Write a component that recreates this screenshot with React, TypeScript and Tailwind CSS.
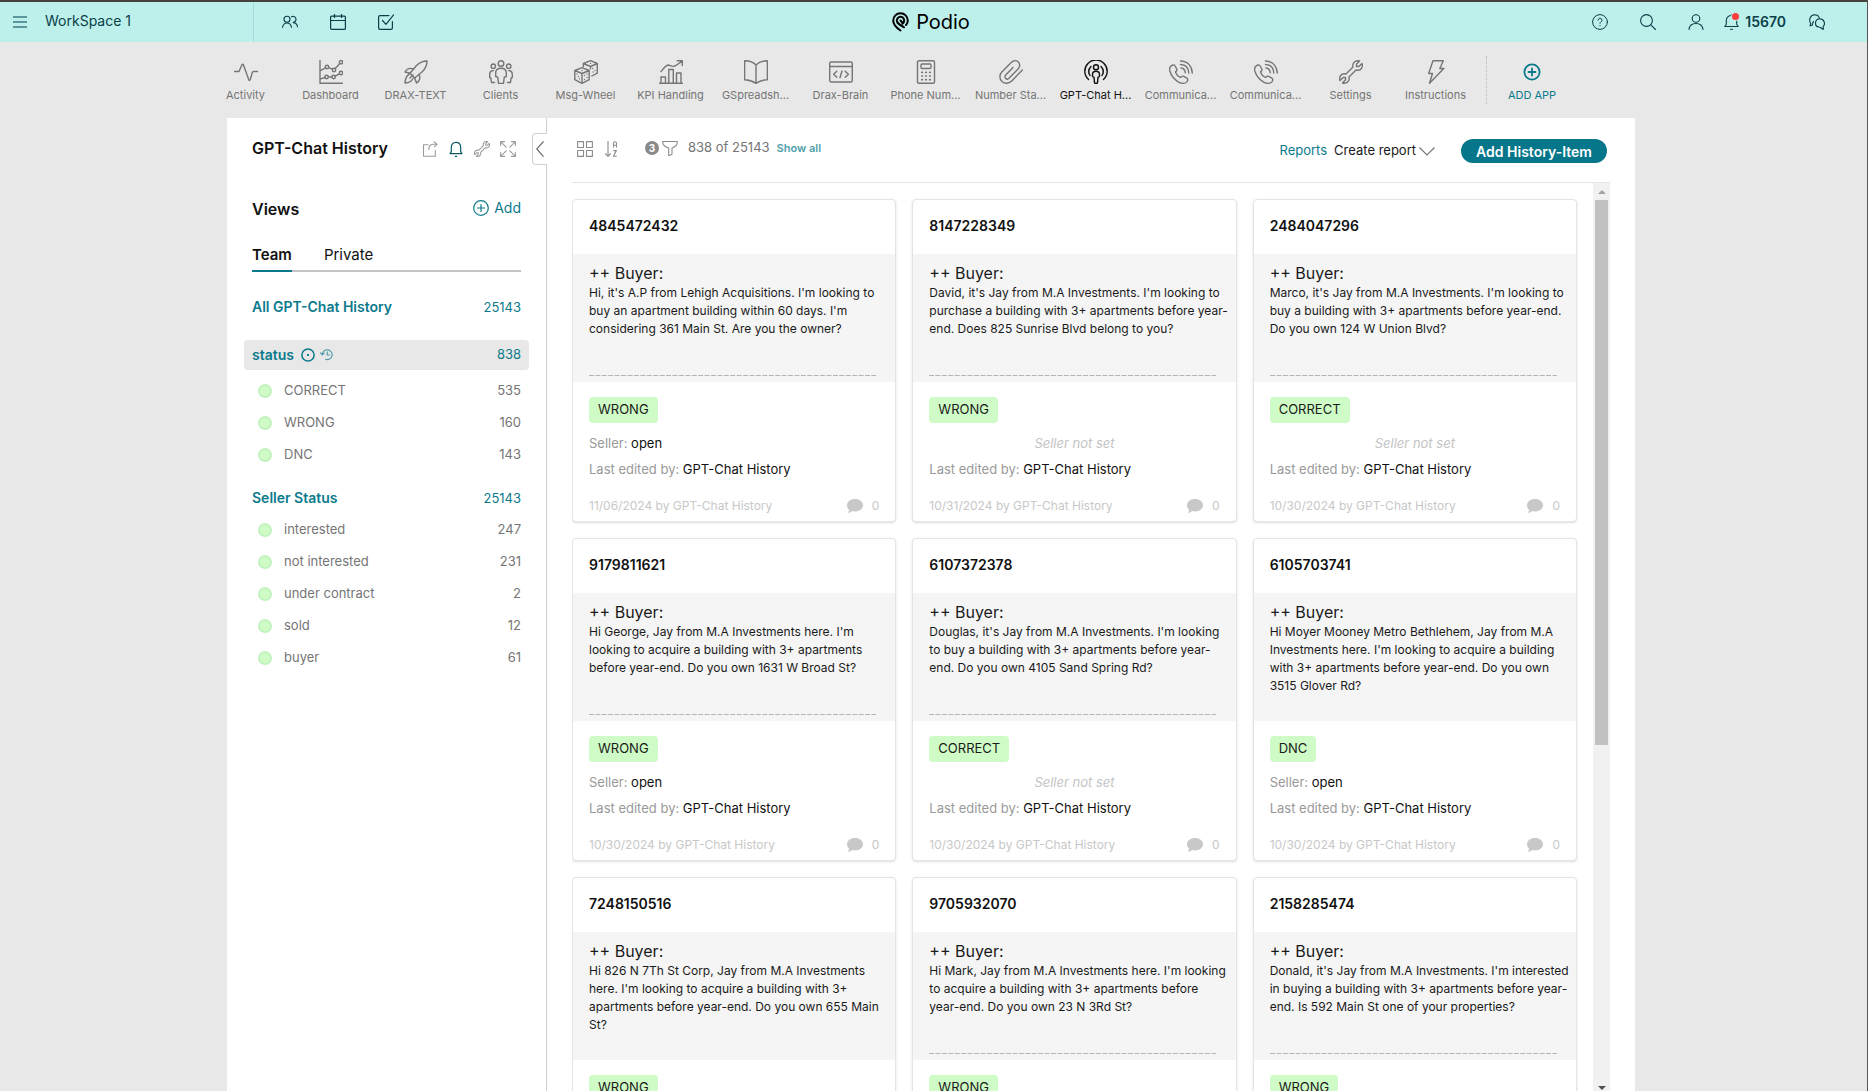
import React from "react";

type IconProps = { className?: string; children: React.ReactNode; box?: number; sw?: number };

function Svg({ className = "size-6", children, box = 24, sw = 1.4 }: IconProps) {
  return (
    <svg
      className={className}
      viewBox={`0 0 ${box} ${box}`}
      fill="none"
      stroke="currentColor"
      strokeWidth={sw}
      strokeLinecap="round"
      strokeLinejoin="round"
      aria-hidden="true"
    >
      {children}
    </svg>
  );
}

const wrenchPath =
  "M20.5 1 17.5 4.2v2.3h2.3L23 3.5c1 3-.5 7-4.5 6.8L17 10l-7 7c.8 3-1 6-4.5 6.3-.8 0-1.4-.1-2-.3l3-3.2v-2.3H4.2L1 20.5c-1-3 .5-7 4.5-6.8L7 14l7-7c-.8-3 1-6 4.5-6.3.8 0 1.4.1 2 .3z";

const phone = (
  <>
    <path d="M2.5 5.6 4 5q1.5-.5 2.2 1l1.5 3q.6 1.3-.5 2.2l-.8.8c.8 2.3 2.5 4.2 5 5.5l1.2-.9q1-.8 2.2-.2l3 1.7q1.3.8.9 2.2l-.6 1.3c-1.5 2-5 2.2-8 .7C6 20 2 15 .8 11c-.5-2 .2-4.4 1.7-5.4z" />
    <path d="M11.5 1c7 0 11.5 5 11.8 12M11.5 4.5c5 .2 8 3.5 8.3 8.5M12 8c2.5.2 4 2 4.3 4.8" />
  </>
);

const apps: { label: string; icon: React.ReactNode; active?: boolean }[] = [
  { label: "Activity", icon: <path d="M.5 11.5H5L8 4.8q.7-1.3 1.4 0l5.4 15q.8 1.4 1.4 0l2.3-7.8.9-.5h4.1" /> },
  {
    label: "Dashboard",
    icon: (
      <>
        <path d="M1 .5v22.8h22.5M1 10.8l5.4-3M9.7 7.7l3.6 1.5M16.2 8.6l4.7-5M1 19.2l4.8-1.7M9.5 17h3.2M16.2 16.2l4.2-2.3" />
        <circle cx="8" cy="7" r="1.7" />
        <circle cx="15" cy="10" r="1.7" />
        <circle cx="22" cy="2.2" r="1.7" />
        <circle cx="7.6" cy="17" r="1.7" />
        <circle cx="14.6" cy="17" r="1.7" />
        <circle cx="22" cy="13" r="1.7" />
      </>
    ),
  },
  {
    label: "DRAX-TEXT",
    icon: (
      <>
        <path d="M23 1c-5 0-8.500 2.500-10.500 4.500L6 13.300l4.700 4.700 7.800-6.500C20.500 9.500 23 6 23 1z" />
        <path d="M9.700 9C5.500 7.500 3 8.500 1 12l5 1.300M15 14.500c2 4 .5 6.500-2.500 8.500l-1.800-5M5 14.500C2 16 1.300 19 1 23c4-.3 6.500-1.500 8-4.500M9 15l-3 3" />
      </>
    ),
  },
  {
    label: "Clients",
    icon: (
      <>
        <circle cx="12" cy="3.500" r="2.800" />
        <circle cx="4.300" cy="6.200" r="2.200" />
        <circle cx="19.700" cy="6.200" r="2.200" />
        <path d="M12 8.200c-4 0-5.300 2-5.300 4.800v3.500l2 .7.8 6.200h5l.8-6.200 2-.7V13c0-2.800-1.300-4.800-5.300-4.800z" />
        <path d="M4.300 10.500C1.500 10.700.7 12.500.7 14.500v3l1.200.6.600 4.400h3M19.700 10.500c2.800.2 3.600 2 3.600 4v3l-1.200.6-.6 4.400h-3" />
      </>
    ),
  },
  {
    label: "Msg-Wheel",
    icon: (
      <>
        <path d="m8 7.700 7.200 2.800v9.200L8 23.300.8 19.700v-9.200zM.8 10.500 8 13.500l7.200-3M8 13.500v9.800" />
        <path d="M9.300 6.500v-3L16.500.7l6.800 2.800v9.700l-5.500 2.800M9.300 3.500l7.200 3 6.800-3M16.500 6.500v2.300" />
        <path d="M3 14v.1M5.500 18.700v.1M4.300 16.500v.1M10.500 15.500v.1M13 17.500v.1M10.500 19.500v.1M13 14v.1M8 10.500v.1M16.500 3.500v.1M18.700 8.500v.1M21 10.500v.1M19 12v.1" />
      </>
    ),
  },
  {
    label: "KPI Handling",
    icon: <path d="M.5 23.300h23M2 23v-6h4.500v6M9.800 23V9.500h4.500V23M17.500 23V13H22v10M2 11.500C5 8 7 5.300 9 5c2 0 3.500 2 6 1.300C18 5.300 20 3.300 23 1M18.300.7h5v4.800" />,
  },
  {
    label: "GSpreadsh...",
    icon: <path d="M12 5C9 1.800 5 .8 1 .7q-.4 0-.4.5v18.500q5.500-.2 11.400 3.600 5.900-3.800 11.400-3.600V1.200q0-.5-.4-.5C19 .8 15 1.800 12 5zM12 5v18.300" />,
  },
  {
    label: "Drax-Brain",
    icon: (
      <>
        <rect x=".7" y="2" width="22.600" height="20" rx="1.500" />
        <path d="M.7 6.500h22.600M7.800 11.200 4.600 14.200l3.200 3M16.200 11.200l3.200 3-3.200 3M13 11l-2 6.500" />
      </>
    ),
  },
  {
    label: "Phone Num...",
    icon: (
      <>
        <rect x="3.500" y=".7" width="17" height="22.600" rx="1.500" />
        <rect x="7" y="4" width="10" height="4.500" rx="1" />
        <path d="M7.800 12.300h.6M11.700 12.300h.6M15.600 12.300h.6M7.800 16h.6M11.700 16h.6M15.600 16h.6M7.800 19.700h.6M11.700 19.700h.6M15.600 19.700h.6" strokeWidth="1.700" />
      </>
    ),
  },
  {
    label: "Number Sta...",
    icon: <path d="M23.300 10 13 20.800c-2.800 3-7.200 3.200-10 .7s-2.800-6.800-.2-9.500L12.500 2.300c2-2 5-2 6.800-.3s1.900 4.700 0 6.700L10 18.300c-1 1-2.500 1-3.400.1s-.9-2.300.1-3.300l7.300-7.600" />,
  },
  {
    label: "GPT-Chat H...",
    active: true,
    icon: (
      <>
        <circle cx="12" cy="7.300" r="2.500" />
        <path d="M12 11.300c-2.800 0-3.500 1.400-3.500 3.200v2l1.500.9.5 5.400q1.500 1 3 0l.5-5.400 1.500-.9v-2c0-1.800-.7-3.200-3.500-3.200z" />
        <path d="M4.500 19.500a11.200 11.200 0 1 1 15 0M6 15.500a7.300 7.300 0 0 1 1-9M18 15.500a7.300 7.300 0 0 0-1-9" />
      </>
    ),
  },
  { label: "Communica...", icon: phone },
  { label: "Communica...", icon: phone },
  { label: "Settings", icon: <path d={wrenchPath} /> },
  { label: "Instructions", icon: <path d="M9 .8h10.300L15.800 8.500h4L5.500 23.300 8.500 13.500H4.700z" /> },
];

function Header() {
  return (
    <header className="flex h-[42px] shrink-0 items-stretch border-t-2 border-[#444141] bg-[#bdefeb] text-[#0b3f49]">
      <div className="flex flex-1">
        <div className="flex w-[254px] items-center border-r border-[#a4dcdb] pl-[13px]">
          <button aria-label="Menu" className="flex w-[14px] flex-col gap-[3px] text-[#5c979d]">
            <span className="h-[2px] w-full bg-current" />
            <span className="h-[2px] w-full bg-current" />
            <span className="h-[2px] w-full bg-current" />
          </button>
          <span className="ml-[18px] pb-[3px] text-[14px]">WorkSpace 1</span>
        </div>
        <div className="flex items-center gap-8 pl-7">
          <button aria-label="People">
            <Svg className="size-4" box={16} sw={1.1}>
              <circle cx="5" cy="5.300" r="3" />
              <path d="M.5 13.500C1 10.500 2.500 9 5 9s4 1.500 4.500 4.500M9.500 2.800c2-1.200 4.500 0 4.500 2.400 0 1.800-1.200 2.800-2.700 3M11.300 8.800c2.500 0 3.800 1.500 4.200 4" />
            </Svg>
          </button>
          <button aria-label="Calendar">
            <Svg className="size-4" box={16} sw={1.2}>
              <rect x=".6" y="2.200" width="14.800" height="13.200" rx="1" />
              <path d="M.6 6.500h14.800M4.500.5v3M11.500.5v3" />
            </Svg>
          </button>
          <button aria-label="Tasks">
            <Svg className="size-4" box={16} sw={1.2}>
              <path d="M11 1.600H2q-1.400 0-1.400 1.400v11q0 1.400 1.400 1.400h11q1.400 0 1.400-1.400V7.500M4.500 6.500 8 10.300 15.600.8" />
            </Svg>
          </button>
        </div>
      </div>
      <a href="#podio" className="flex items-center gap-[7px] pr-[5px] text-black">
        <svg className="h-5 w-[17px]" viewBox="0 0 17 20" fill="none" stroke="currentColor" strokeWidth="2" strokeLinecap="round" aria-hidden="true">
          <path d="M8.500 18.500C4 15.500 1.200 12.500 1.200 8.500a7.300 7.300 0 0 1 14.600 0c0 1.800-.7 3.300-1.800 4.500" />
          <path d="M12 15.300C7 12.300 4.800 11 4.800 8.500a3.700 3.700 0 1 1 5.700 3.100" />
          <path d="M8.500 8.500l2.300 2.500" />
        </svg>
        <span className="text-[20px] leading-none">Podio</span>
      </a>
      <div className="flex flex-1 items-center justify-end gap-8">
        <button aria-label="Help">
          <Svg className="size-4" box={16} sw={1}>
            <circle cx="8" cy="8" r="7.400" />
            <path d="M6 6.200c0-2.600 4-2.600 4 0 0 1.600-2 1.400-2 3.100M8 11.500v.3" />
          </Svg>
        </button>
        <button aria-label="Search">
          <Svg className="size-4" box={16} sw={1.1}>
            <circle cx="6.500" cy="6.500" r="5.900" />
            <path d="m10.800 10.800 4.700 4.700" />
          </Svg>
        </button>
        <button aria-label="Profile">
          <Svg className="size-4" box={16} sw={1.1}>
            <circle cx="8" cy="4.500" r="3.800" />
            <path d="M1 15.500C1.500 11.500 4 9.500 8 9.500s6.500 2 7 6" />
          </Svg>
        </button>
        <div className="-ml-3 -mr-[9px] flex items-center gap-[5px]">
          <button aria-label="Notifications" className="relative">
            <Svg className="size-4" box={16} sw={1.1}>
              <path d="M.8 12.500h13.400l-1.500-2.200V6.500C12.700 3.300 10.500 1.500 7.500 1.500S2.300 3.300 2.300 6.500v3.800zM7.500.5v1M6.500 15.200h2" />
            </Svg>
            <span className="absolute -top-[1px] left-[8px] size-[7px] rounded-full bg-[#ff3b3b] ring-1 ring-[#bdefeb]" />
          </button>
          <span className="pb-[2px] text-[14px] font-semibold">15670</span>
        </div>
        <button aria-label="Chat" className="mr-[42px]">
          <Svg className="size-4" box={16} sw={1.1}>
            <path d="M3 11.500 1 11.800l.8-2C-.5 6 1 1 5.500.8c2.500 0 4.200 1.200 4.800 3M4.500 7.500C3.500 8.500 3.800 10 3 11.500" />
            <path d="M14.500 15.300l-.5-2.500c3-3 1-8-3.200-8C5.500 5 5 12.500 10 13c1.500 0 2.500 2 4.500 2.300z" />
          </Svg>
        </button>
      </div>
    </header>
  );
}

function AppNav() {
  return (
    <nav className="mx-auto flex h-[76px] w-full max-w-[1408px] shrink-0 pt-[14px]">
      <div className="-ml-6 flex">
        {apps.map((a, i) => (
          <a
            key={i}
            href={`#app-${i}`}
            className={
              a.active
                ? "flex w-[85px] flex-col items-center pt-1 text-[#111]"
                : "flex w-[85px] flex-col items-center pt-1 text-[#757575]"
            }
          >
            <Svg>{a.icon}</Svg>
            <span className="mt-[3px] whitespace-nowrap text-[11px] leading-4">{a.label}</span>
          </a>
        ))}
      </div>
      <div className="ml-2 h-12 border-l border-dotted border-[#bbb]" />
      <button className="flex w-[90px] flex-col items-center pt-1 text-[#0b7a8c]">
        <Svg sw={1.8}>
          <circle cx="12" cy="12" r="7.600" />
          <path d="M12 8.500v7M8.500 12h7" />
        </Svg>
        <span className="mt-[3px] text-[11px] leading-4">ADD APP</span>
      </button>
    </nav>
  );
}

function ViewRow({ name, count }: { name: string; count: number }) {
  return (
    <li>
      <a href="#view" className="flex h-8 items-center pl-[14px] pr-2 text-[13px] text-[#757575]">
        <span className="size-[14px] rounded-full border-2 border-[#c2f2bd] bg-[#cffcc6]" />
        <span className="ml-3 flex-1">{name}</span>
        <span>{count}</span>
      </a>
    </li>
  );
}

const statusRows: [string, number][] = [["CORRECT", 535], ["WRONG", 160], ["DNC", 143]];
const sellerRows: [string, number][] = [["interested", 247], ["not interested", 231], ["under contract", 2], ["sold", 12], ["buyer", 61]];

function Sidebar() {
  return (
    <aside className="relative w-[320px] shrink-0 border-r border-[#d0d0d0] pl-[17px] pr-[17px]">
      <div className="flex h-[60px] items-center px-2">
        <h1 className="flex-1 text-[16px] font-semibold text-[#111]">GPT-Chat History</h1>
        <div className="mr-[5px] flex gap-[10px] pt-[2px] text-[#9a9a9a]">
          <button aria-label="Share">
            <Svg className="size-4" box={16} sw={1.1}>
              <path d="M6 3.800H1.500v11.500h11.800V9.500M6.800 8.500c0-3.500 1.500-5.200 5-5.200h3M12.300.8 15 3.300l-2.700 2.500" />
            </Svg>
          </button>
          <button aria-label="Follow" className="text-[#0b5a66]">
            <Svg className="size-4" box={16} sw={1.2}>
              <path d="M2 12.600h12l-1.300-2V6.500C12.700 3.300 10.700 1.300 8 1.300S3.300 3.300 3.300 6.500v4.100zM7.300 15.300h1.400" />
            </Svg>
          </button>
          <button aria-label="Modify app">
            <Svg className="size-4" sw={1.6}>
              <path d={wrenchPath} />
            </Svg>
          </button>
          <button aria-label="Expand">
            <Svg className="size-4" box={16} sw={1.1}>
              <path d="M.6 4.500V.6h3.900M11.500.6h3.900v3.900M15.400 11.500v3.900h-3.900M4.500 15.400H.6v-3.900M.6.600l5.600 5.600M15.400.6 9.800 6.200M15.400 15.400 9.800 9.800M.6 15.400l5.600-5.600" />
            </Svg>
          </button>
        </div>
      </div>
      <button
        aria-label="Collapse sidebar"
        className="absolute -right-px top-[15px] flex h-8 w-[15px] items-center justify-center rounded-l border border-r-0 border-[#d0d0d0] bg-white text-[#666]"
      >
        <svg className="h-4 w-2" viewBox="0 0 8 16" fill="none" stroke="currentColor" strokeWidth="1.200" aria-hidden="true">
          <path d="M7.600.4.700 8l6.900 7.600" />
        </svg>
      </button>

      <div className="mt-[17px] flex h-7 items-center justify-between px-2">
        <h2 className="text-[16px] font-semibold text-[#111]">Views</h2>
        <button className="flex items-center gap-[5px] pb-[3px] text-[14px] text-[#0b7a8c]">
          <Svg className="size-4" box={16} sw={1.2}>
            <circle cx="8" cy="8" r="7.300" />
            <path d="M8 4.500v7M4.500 8h7" />
          </Svg>
          Add
        </button>
      </div>

      <div role="tablist" className="mx-2 mt-[21px] flex gap-8 border-b-2 border-[#c4c4c4] text-[15px] text-[#111]">
        <button role="tab" aria-selected="true" className="-mb-[2px] border-b-2 border-[#0b7a8c] pb-[3px] font-semibold">
          Team
        </button>
        <button role="tab" aria-selected="false" className="-mb-[2px] pb-[5px]">
          Private
        </button>
      </div>

      <a href="#all" className="mt-5 flex h-[30px] items-center justify-between px-2 text-[13px] text-[#0b7a8c]">
        <span className="text-[14px] font-semibold">All GPT-Chat History</span>
        <span className="pt-[2px]">25143</span>
      </a>

      <a href="#status" className="mt-[18px] flex h-[30px] items-center rounded bg-[#e8e8e8] px-2 text-[13px] text-[#0b7a8c]">
        <span className="text-[14px] font-semibold">status</span>
        <Svg className="ml-[7px] size-[14px]" box={14} sw={1.5}>
          <circle cx="7" cy="7" r="6.100" />
          <path d="M6.700 7h.6" strokeWidth="1.800" />
        </Svg>
        <Svg className="ml-[5px] size-[13px] opacity-70" box={14} sw={1.2}>
          <path d="M2.500 7A5.300 5.300 0 1 1 6 12.200M.5 5.300 2.500 7.500l2-2M7.800 4v3.500h2.700" />
        </Svg>
        <span className="ml-auto">838</span>
      </a>
      <ul className="mt-[5px]">
        {statusRows.map(([n, c]) => (
          <ViewRow key={n} name={n} count={c} />
        ))}
      </ul>

      <a href="#seller" className="mt-3 flex h-[30px] items-center justify-between px-2 text-[13px] text-[#0b7a8c]">
        <span className="text-[14px] font-semibold">Seller Status</span>
        <span className="pt-[2px]">25143</span>
      </a>
      <ul className="mt-px">
        {sellerRows.map(([n, c]) => (
          <ViewRow key={n} name={n} count={c} />
        ))}
      </ul>
    </aside>
  );
}

type Item = { title: string; text: string[]; status: string; seller?: string; date: string };

const items: Item[] = [
  { title: "4845472432", text: ["Hi, it's A.P from Lehigh Acquisitions. I'm looking to", "buy an apartment building within 60 days. I'm", "considering 361 Main St. Are you the owner?"], status: "WRONG", seller: "open", date: "11/06/2024" },
  { title: "8147228349", text: ["David, it's Jay from M.A Investments. I'm looking to", "purchase a building with 3+ apartments before year-", "end. Does 825 Sunrise Blvd belong to you?"], status: "WRONG", date: "10/31/2024" },
  { title: "2484047296", text: ["Marco, it's Jay from M.A Investments. I'm looking to", "buy a building with 3+ apartments before year-end.", "Do you own 124 W Union Blvd?"], status: "CORRECT", date: "10/30/2024" },
  { title: "9179811621", text: ["Hi George, Jay from M.A Investments here. I'm", "looking to acquire a building with 3+ apartments", "before year-end. Do you own 1631 W Broad St?"], status: "WRONG", seller: "open", date: "10/30/2024" },
  { title: "6107372378", text: ["Douglas, it's Jay from M.A Investments. I'm looking", "to buy a building with 3+ apartments before year-", "end. Do you own 4105 Sand Spring Rd?"], status: "CORRECT", date: "10/30/2024" },
  { title: "6105703741", text: ["Hi Moyer Mooney Metro Bethlehem, Jay from M.A", "Investments here. I'm looking to acquire a building", "with 3+ apartments before year-end. Do you own", "3515 Glover Rd?"], status: "DNC", seller: "open", date: "10/30/2024" },
  { title: "7248150516", text: ["Hi 826 N 7Th St Corp, Jay from M.A Investments", "here. I'm looking to acquire a building with 3+", "apartments before year-end. Do you own 655 Main", "St?"], status: "WRONG", seller: "open", date: "10/30/2024" },
  { title: "9705932070", text: ["Hi Mark, Jay from M.A Investments here. I'm looking", "to acquire a building with 3+ apartments before", "year-end. Do you own 23 N 3Rd St?"], status: "WRONG", date: "10/30/2024" },
  { title: "2158285474", text: ["Donald, it's Jay from M.A Investments. I'm interested", "in buying a building with 3+ apartments before year-", "end. Is 592 Main St one of your properties?"], status: "WRONG", date: "10/30/2024" },
];

function Card({ item }: { item: Item }) {
  return (
    <article className="rounded-sm border border-[#e4e4e4] bg-white shadow-sm">
      <h3 className="flex h-[54px] items-center px-4 pb-[3px] text-[14px] font-semibold text-[#111]">{item.title}</h3>
      <div className="h-32 bg-[#f5f5f5] px-4 pt-2 text-[#1a1a1a]">
        <p className="text-[16px] leading-[22px]">++ Buyer:</p>
        <p className="text-[12px] leading-[18px]">
          {item.text.map((l) => (
            <span key={l} className="block whitespace-nowrap">
              {l}
            </span>
          ))}
        </p>
        {item.text.length < 4 && (
          <svg className="mt-[37px] h-px w-[287px]" aria-hidden="true">
            <line x1="0" y1=".5" x2="287" y2=".5" stroke="#b4b4b4" strokeDasharray="5 1.420" />
          </svg>
        )}
      </div>
      <div className="px-4 pb-[7px] pt-[15px] text-[13px]">
        <span className="inline-flex h-[26px] items-center rounded-sm bg-[#cffcc6] px-[9px] text-[#1a1a1a]">{item.status}</span>
        {item.seller ? (
          <p className="mt-[7px] leading-[26px] text-[#999]">
            Seller: <span className="text-[#111]">{item.seller}</span>
          </p>
        ) : (
          <p className="mt-[7px] text-center italic leading-[26px] text-[#c4c4c4]">Seller not set</p>
        )}
        <p className="leading-[26px] text-[#999]">
          Last edited by: <span className="text-[#111]">GPT-Chat History</span>
        </p>
        <div className="mt-4 flex h-4 items-center text-[12px] text-[#c8c8c8]">
          <span className="flex-1">{item.date} by GPT-Chat History</span>
          <svg className="h-[14px] w-4" viewBox="0 0 16 14" fill="currentColor" aria-hidden="true">
            <path d="M8 0c4.500 0 8 2.700 8 6.200s-3.500 6.200-8 6.200c-1 0-2-.1-2.800-.4C4 13 2.500 13.800.8 14c.8-.9 1.200-2 1.300-3.300C.8 9.600 0 8 0 6.200 0 2.700 3.500 0 8 0z" />
          </svg>
          <span className="ml-[9px]">0</span>
        </div>
      </div>
    </article>
  );
}

function Toolbar() {
  return (
    <div className="flex h-[65px] items-center border-b border-[#e4e4e4] pl-[5px] pr-[3px] pt-[2px] text-[#8c8c8c]">
      <div className="flex flex-1 items-center pb-[6px]">
        <button aria-label="Layout" className="mt-[2px]">
          <Svg className="size-4" box={16} sw={1.1}>
            <path d="M.6.600h5.900v5.900H.6zM9.500.6h5.900v5.900H9.500zM.6 9.500h5.900v5.900H.6zM9.500 9.500h5.900v5.900H9.500z" />
          </Svg>
        </button>
        <button aria-label="Sort" className="ml-3 mt-[2px]">
          <svg className="h-4 w-3" viewBox="0 0 12 16" fill="none" stroke="currentColor" strokeWidth="1.100" aria-hidden="true">
            <path d="M3 0v15M.3 12.500 3 15.300l2.700-2.800M8.500 6.500v-4q0-1.800 1.500-1.800t1.500 1.800v4M8.500 4.200h3M8.300 9.600h3L8.500 15.300h3.300" />
          </svg>
        </button>
        <button aria-label="Filter" className="ml-7 flex items-center gap-[3px]">
          <span className="flex size-[14px] items-center justify-center rounded-full bg-[#8a8a8a] text-[10px] font-bold text-white">3</span>
          <Svg className="size-4" box={16} sw={1.1}>
            <path d="M.6 1.500h14.800c0 3-2 5.500-5.400 6.500v6.200q-1 1.300-3.300 1.200V8C3 7 .8 5 .6 1.500z" />
          </Svg>
        </button>
        <span className="ml-[10px] text-[13px] text-[#757575]">838 of 25143</span>
        <a href="#show-all" className="ml-[7px] text-[11px] font-semibold text-[#4f9faa]">
          Show all
        </a>
      </div>
      <a href="#reports" className="text-[13px] text-[#0b7a8c]">
        Reports
      </a>
      <button className="ml-[7px] flex items-center gap-[3px] text-[13px] text-[#1a1a1a]">
        Create report
        <svg className="h-[9px] w-4 text-[#777]" viewBox="0 0 16 9" fill="none" stroke="currentColor" strokeWidth="1.200" aria-hidden="true">
          <path d="m.5.500 7.500 7.500L15.500.5" />
        </svg>
      </button>
      <button className="ml-[26px] h-6 w-[146px] rounded-full bg-[#06768a] text-[14px] font-semibold text-white">Add History-Item</button>
    </div>
  );
}

export default function App() {
  return (
    <div className="flex h-screen flex-col overflow-hidden bg-[#e8e8e8] font-['Inter',sans-serif]">
      <div className="flex min-h-0 flex-1 flex-col border-r border-[#555]">
        <Header />
        <div className="flex min-h-0 flex-1 flex-col pr-[5px]">
          <AppNav />
          <div className="mx-auto flex min-h-0 w-full max-w-[1408px] flex-1 bg-white">
            <Sidebar />
            <main className="flex min-w-0 flex-1 flex-col pl-[25px] pr-[25px]">
              <Toolbar />
              <div className="flex min-h-0 flex-1">
                <div className="grid flex-1 grid-cols-3 content-start gap-4 overflow-hidden pr-4 pt-4">
                  {items.map((it) => (
                    <Card key={it.title} item={it} />
                  ))}
                </div>
                <div className="flex w-[17px] flex-col items-center bg-[#f1f1f1]" aria-hidden="true">
                  <span className="mb-[6px] mt-[7px] border-x-4 border-b-4 border-x-transparent border-b-[#a3a3a3]" />
                  <span className="h-[60%] w-[13px] bg-[#c1c1c1]" />
                  <span className="mb-px mt-auto border-x-4 border-t-4 border-x-transparent border-t-[#505050]" />
                </div>
              </div>
            </main>
          </div>
        </div>
      </div>
    </div>
  );
}
